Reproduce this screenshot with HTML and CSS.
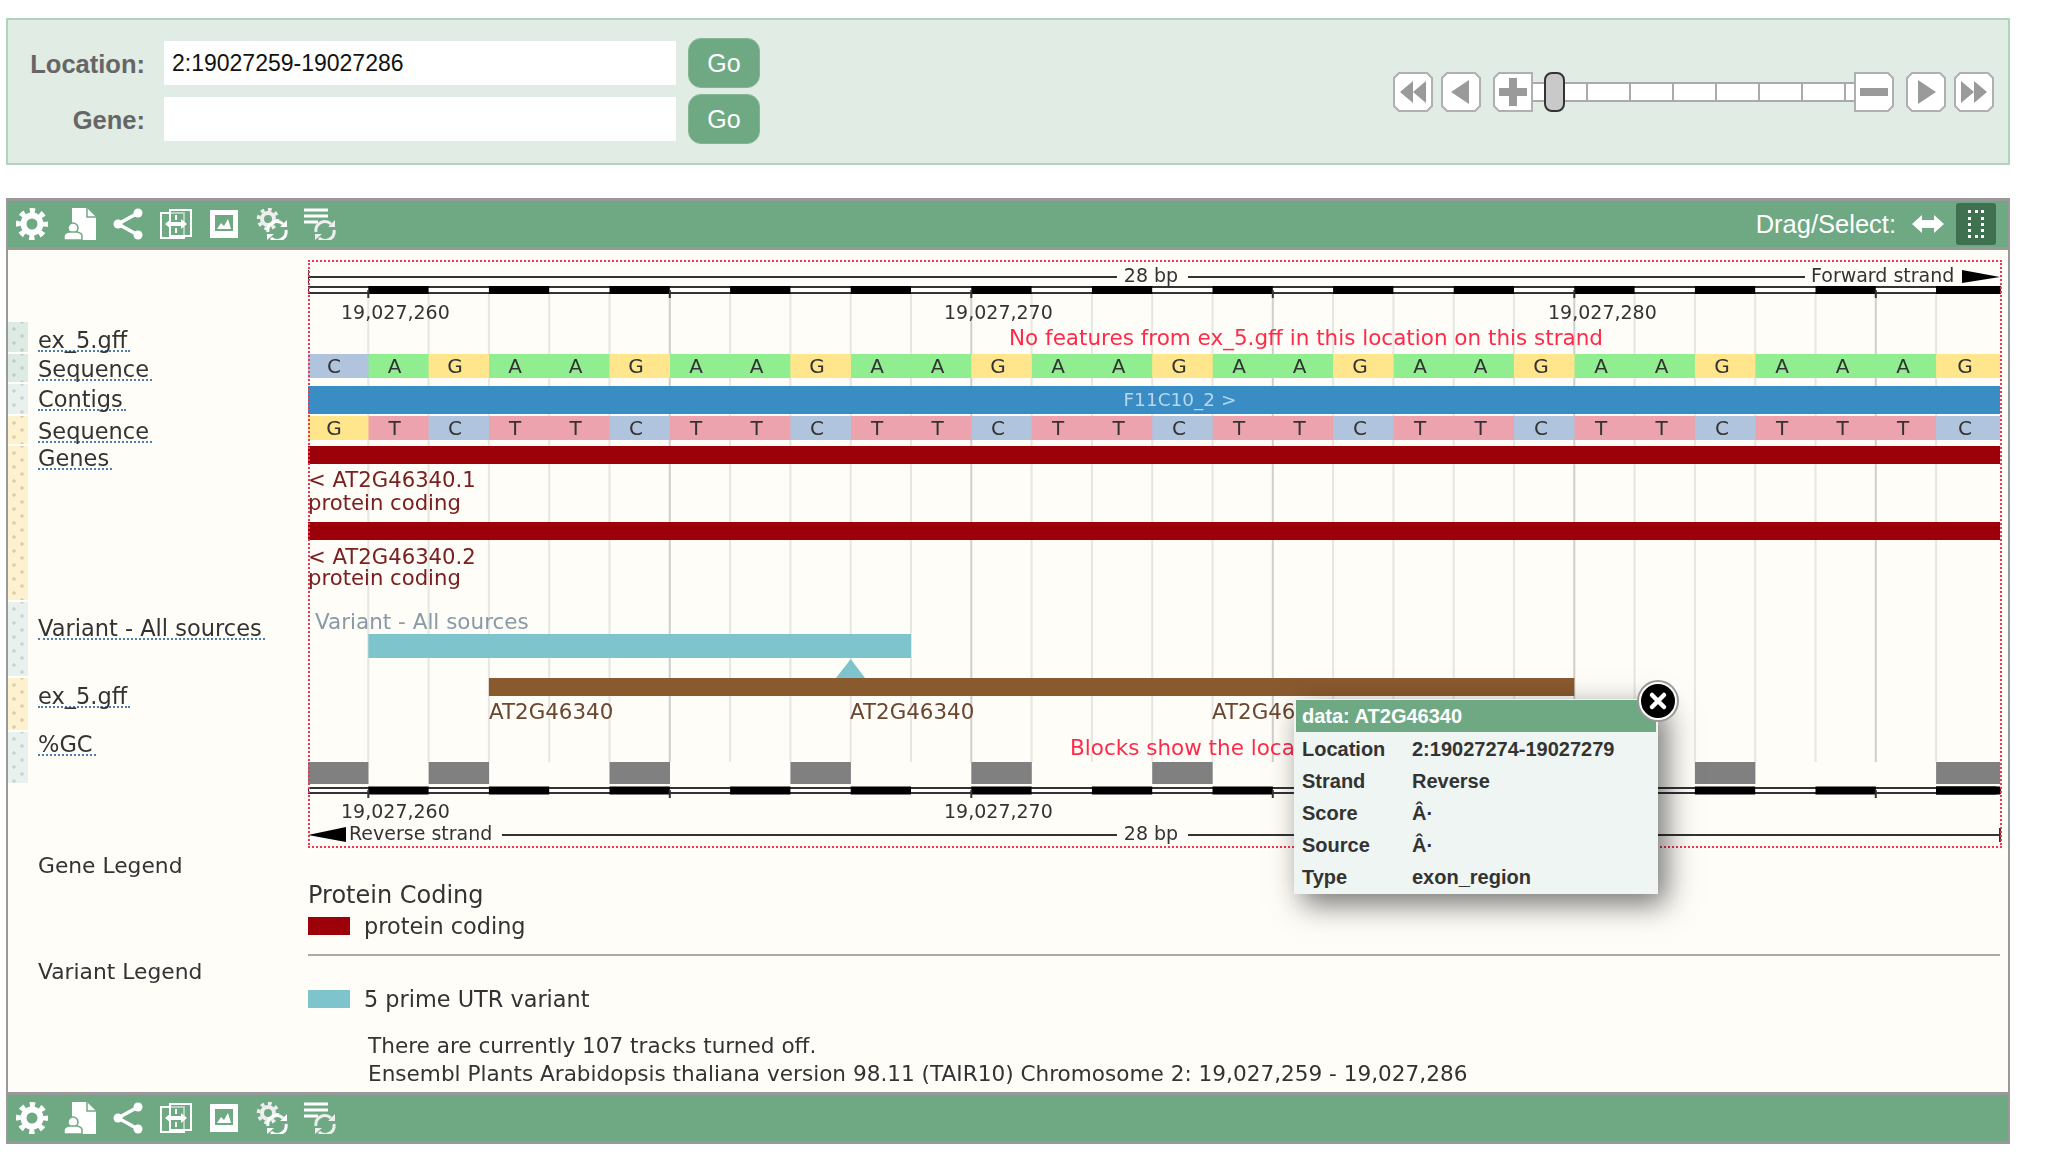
FILE: index.html
```html
<!DOCTYPE html>
<html>
<head>
    <title>Ensembl Plants Region in detail</title>
    <link rel="stylesheet" href="styles.css">
</head>
<body>
    <svg class="defs" width="0" height="0">
        <symbol id="i-gear" viewBox="0 0 32 32">
            <circle cx="16" cy="16" r="8.5" fill="none" stroke="#fff" stroke-width="6"/>
            <circle cx="16" cy="16" r="13.5" fill="none" stroke="#fff" stroke-width="5" stroke-dasharray="5.3 5.3" stroke-dashoffset="2.6"/>
        </symbol>
        <symbol id="i-doc" viewBox="0 0 32 32">
            <path d="M8 0H23L32 9V32H8Z" fill="#fff"/>
            <path d="M23 0V9H32" fill="none" stroke="#6fa983" stroke-width="1.5"/>
            <circle cx="9" cy="20" r="5" fill="#fff" stroke="#6fa983" stroke-width="1.5"/>
            <path d="M0 32V28Q0 25 5 24H13Q18 25 18 28V32Z" fill="#fff" stroke="#6fa983" stroke-width="1.5"/>
        </symbol>
        <symbol id="i-share" viewBox="0 0 32 32">
            <path d="M26 5L6 16L26 27" fill="none" stroke="#fff" stroke-width="3.5"/>
            <circle cx="26" cy="5" r="4.5" fill="#fff"/>
            <circle cx="6" cy="16" r="4.5" fill="#fff"/>
            <circle cx="26" cy="27" r="4.5" fill="#fff"/>
        </symbol>
        <symbol id="i-resize" viewBox="0 0 32 32">
            <path d="M1 5H24V30H1Z" fill="none" stroke="#fff" stroke-width="2"/>
            <path d="M10 2H31V28H10Z" fill="#6fa983" fill-opacity=".5" stroke="#fff" stroke-width="2"/>
            <path d="M5 16L11 11V14H21V11L27 16L21 21V18H11V21Z" fill="#fff"/>
            <path d="M16 7V12M16 20V25" stroke="#fff" stroke-width="2"/>
        </symbol>
        <symbol id="i-image" viewBox="0 0 32 32">
            <path d="M2 2H30V30H2ZM7 7V23H25V7Z" fill="#fff" fill-rule="evenodd"/>
            <path d="M9 21L13 15L16 18L20 11L23 21Z" fill="#fff"/>
        </symbol>
        <symbol id="i-gearsync" viewBox="0 0 32 32">
            <circle cx="12" cy="11" r="6" fill="none" stroke="#eee" stroke-width="4"/>
            <circle cx="12" cy="11" r="9.5" fill="none" stroke="#eee" stroke-width="3.5" stroke-dasharray="3.7 3.7"/>
            <path d="M12 24A9 9 0 0 1 27 16M30 22A9 9 0 0 1 15 30" fill="none" stroke="#fff" stroke-width="3"/>
            <path d="M24 19H31V12ZM18 26H11V32Z" fill="#fff"/>
        </symbol>
        <symbol id="i-listsync" viewBox="0 0 32 32">
            <path d="M0 2H24M0 8H24M0 14H14" stroke="#fff" stroke-width="3"/>
            <path d="M12 24A9 9 0 0 1 27 16M30 22A9 9 0 0 1 15 30" fill="none" stroke="#eee" stroke-width="3"/>
            <path d="M24 19H31V12ZM18 26H11V32Z" fill="#eee"/>
        </symbol>
    </svg>

    <div class="location-panel">
        <form class="location-form">
            <label class="field-label" for="loc">Location:</label>
            <input class="field-input" id="loc" type="text" value="2:19027259-19027286">
            <button class="go-button" type="button">Go</button>
            <label class="field-label" for="gene">Gene:</label>
            <input class="field-input" id="gene" type="text">
            <button class="go-button" type="button">Go</button>
        </form>
        <div class="nav">
            <svg class="nav-button" viewBox="0 0 40 40"><path class="nav-frame" d="M6 1H34L39 6V34L34 39H6L1 34V6Z"/><path class="nav-glyph" d="M20 9V31L7 20ZM33 9V31L20 20Z"/></svg>
            <svg class="nav-button" viewBox="0 0 40 40"><path class="nav-frame" d="M6 1H34L39 6V34L34 39H6L1 34V6Z"/><path class="nav-glyph" d="M28 8V32L10 20Z"/></svg>
            <div class="slider">
                <svg class="nav-button" viewBox="0 0 40 40"><path class="nav-frame" d="M6 1H39V39H6L1 34V6Z"/><path class="nav-glyph" d="M16 6H24V16H34V24H24V34H16V24H6V16H16Z"/></svg>
                <div class="slider-track">
                    <span class="tick tick-first"></span>
                    <span class="tick"></span>
                    <span class="tick"></span>
                    <span class="tick"></span>
                    <span class="tick"></span>
                    <span class="tick"></span>
                    <span class="tick"></span>
                    <span class="tick tick-last"></span>
                    <span class="slider-handle"></span>
                </div>
                <svg class="nav-button" viewBox="0 0 40 40"><path class="nav-frame" d="M1 1H34L39 6V34L34 39H1Z"/><path class="nav-glyph" d="M6 16H34V24H6Z"/></svg>
            </div>
            <svg class="nav-button" viewBox="0 0 40 40"><path class="nav-frame" d="M6 1H34L39 6V34L34 39H6L1 34V6Z"/><path class="nav-glyph" d="M12 8V32L30 20Z"/></svg>
            <svg class="nav-button" viewBox="0 0 40 40"><path class="nav-frame" d="M6 1H34L39 6V34L34 39H6L1 34V6Z"/><path class="nav-glyph" d="M7 9V31L20 20ZM20 9V31L33 20Z"/></svg>
        </div>
    </div>

    <div class="image-panel">
        <div class="toolbar">
            <svg class="tool"><use href="#i-gear"/></svg>
            <svg class="tool"><use href="#i-doc"/></svg>
            <svg class="tool"><use href="#i-share"/></svg>
            <svg class="tool"><use href="#i-resize"/></svg>
            <svg class="tool"><use href="#i-image"/></svg>
            <svg class="tool"><use href="#i-gearsync"/></svg>
            <svg class="tool"><use href="#i-listsync"/></svg>
            <div class="drag-select">
                <span>Drag/Select:</span>
                <svg class="drag-arrow" viewBox="0 0 32 18"><path d="M0 9L10 0V5H22V0L32 9L22 18V13H10V18Z" fill="#fff"/></svg>
                <span class="select-button"><span class="select-box"></span></span>
            </div>
        </div>

        <div class="tracks">
            <div class="track-labels">
                <div class="track track-1 green"><span class="track-name">ex_5.gff</span></div>
                <div class="track track-2 green"><span class="track-name">Sequence</span></div>
                <div class="track track-3 pale"><span class="track-name">Contigs</span></div>
                <div class="track track-4 yellow"><span class="track-name">Sequence</span></div>
                <div class="track track-5 yellow"><span class="track-name">Genes</span></div>
                <div class="track track-6 pale"><span class="track-name">Variant - All sources</span></div>
                <div class="track track-7 yellow"><span class="track-name">ex_5.gff</span></div>
                <div class="track track-8 pale"><span class="track-name">%GC</span></div>
            </div>

            <svg class="genome" width="1694" height="588" viewBox="0 0 1694 588">
                <!-- grid -->
                <path class="grid" d="M60.3 34V502M120.6 34V502M180.9 34V502M241.2 34V502M301.5 34V502M422.1 34V502M482.4 34V502M542.7 34V502M603 34V502M723.6 34V502M783.9 34V502M844.2 34V502M904.5 34V502M1025.1 34V502M1085.4 34V502M1145.7 34V502M1206 34V502M1326.6 34V502M1386.9 34V502M1447.2 34V502M1507.5 34V502M1628.1 34V502"/>
                <path class="grid major" d="M361.8 34V502M663.3 34V502M964.8 34V502M1266.3 34V502M1567.8 34V502"/>

                <!-- forward strand ruler -->
                <path class="rule" d="M0 17H809M880 17H1497M0 10V24"/>
                <text class="ruler-text" x="843" y="22" text-anchor="middle">28 bp</text>
                <text class="ruler-text" x="1503" y="22">Forward strand</text>
                <path d="M1654 10L1692 17L1654 23Z"/>
                <rect class="scale" x="0" y="27" width="1692" height="6"/>
                <line class="scale-on" x1="60.3" x2="1692" y1="30" y2="30"/>
                <rect x="1628.1" y="26" width="64" height="8"/>
                <path class="rule" d="M60.3 30V38M361.8 30V38M663.3 30V38M964.8 30V38M1266.3 30V38M1567.8 30V38"/>
                <text class="ruler-text" x="33" y="59">19,027,260</text>
                <text class="ruler-text" x="636" y="59">19,027,270</text>
                <text class="ruler-text" x="1240" y="59">19,027,280</text>

                <text class="note" x="701" y="85">No features from ex_5.gff in this location on this strand</text>

                <!-- forward sequence -->
                <rect class="base-a" x="0" y="94" width="1692" height="24"/>
                <rect class="base-c" x="0" y="94" width="60.5" height="24"/>
                <rect class="base-g" x="120.6" y="94" width="60.5" height="24"/>
                <rect class="base-g" x="301.5" y="94" width="60.5" height="24"/>
                <rect class="base-g" x="482.4" y="94" width="60.5" height="24"/>
                <rect class="base-g" x="663.3" y="94" width="60.5" height="24"/>
                <rect class="base-g" x="844.2" y="94" width="60.5" height="24"/>
                <rect class="base-g" x="1025.1" y="94" width="60.5" height="24"/>
                <rect class="base-g" x="1206" y="94" width="60.5" height="24"/>
                <rect class="base-g" x="1386.9" y="94" width="60.5" height="24"/>
                <rect class="base-g" x="1628.1" y="94" width="64" height="24"/>
                <text class="base-text" y="113" x="26 86.5 147 207 267.5 328 388 448.5 509 569 629.5 690 750 810.5 871 931 991.5 1052 1112 1172.5 1233 1293 1353.5 1414 1474 1534.5 1595 1657">CAGAAGAAGAAGAAGAAGAAGAAGAAAG</text>

                <!-- contig -->
                <rect class="contig" x="0" y="126" width="1692" height="28"/>
                <text class="contig-text" x="872" y="146" text-anchor="middle">F11C10_2 &gt;</text>

                <!-- reverse sequence -->
                <rect class="base-t" x="0" y="156" width="1692" height="24"/>
                <rect class="base-g" x="0" y="156" width="60.5" height="24"/>
                <rect class="base-c" x="120.6" y="156" width="60.5" height="24"/>
                <rect class="base-c" x="301.5" y="156" width="60.5" height="24"/>
                <rect class="base-c" x="482.4" y="156" width="60.5" height="24"/>
                <rect class="base-c" x="663.3" y="156" width="60.5" height="24"/>
                <rect class="base-c" x="844.2" y="156" width="60.5" height="24"/>
                <rect class="base-c" x="1025.1" y="156" width="60.5" height="24"/>
                <rect class="base-c" x="1206" y="156" width="60.5" height="24"/>
                <rect class="base-c" x="1386.9" y="156" width="60.5" height="24"/>
                <rect class="base-c" x="1628.1" y="156" width="64" height="24"/>
                <text class="base-text" y="175" x="26 86.5 147 207 267.5 328 388 448.5 509 569 629.5 690 750 810.5 871 931 991.5 1052 1112 1172.5 1233 1293 1353.5 1414 1474 1534.5 1595 1657">GTCTTCTTCTTCTTCTTCTTCTTCTTTC</text>

                <!-- genes -->
                <rect class="gene" x="0" y="186" width="1692" height="18"/>
                <text class="gene-text" x="0" y="227">&lt; AT2G46340.1</text>
                <text class="gene-text" x="0" y="250">protein coding</text>
                <rect class="gene" x="0" y="262" width="1692" height="18"/>
                <text class="gene-text" x="0" y="304">&lt; AT2G46340.2</text>
                <text class="gene-text" x="0" y="325">protein coding</text>

                <!-- variants -->
                <text class="variant-text" x="7" y="369">Variant - All sources</text>
                <rect class="variant" x="60.3" y="374" width="542.7" height="24"/>
                <path class="variant" d="M542.7 399L557 418H528Z"/>

                <!-- ex_5.gff -->
                <rect class="feature" x="180.9" y="418" width="1085.4" height="18"/>
                <text class="feature-text" x="181" y="459">AT2G46340</text>
                <text class="feature-text" x="542" y="459">AT2G46340</text>
                <text class="feature-text" x="904" y="459">AT2G46</text>

                <text class="note" x="762" y="495">Blocks show the loca</text>

                <!-- %GC -->
                <rect class="gc" x="0" y="502" width="60.5" height="22"/>
                <rect class="gc" x="120.6" y="502" width="60.5" height="22"/>
                <rect class="gc" x="301.5" y="502" width="60.5" height="22"/>
                <rect class="gc" x="482.4" y="502" width="60.5" height="22"/>
                <rect class="gc" x="663.3" y="502" width="60.5" height="22"/>
                <rect class="gc" x="844.2" y="502" width="60.5" height="22"/>
                <rect class="gc" x="1025.1" y="502" width="60.5" height="22"/>
                <rect class="gc" x="1206" y="502" width="60.5" height="22"/>
                <rect class="gc" x="1386.9" y="502" width="60.5" height="22"/>
                <rect class="gc" x="1628.1" y="502" width="64" height="22"/>

                <!-- reverse strand ruler -->
                <rect class="scale" x="0" y="528" width="1692" height="5"/>
                <line class="scale-on" x1="60.3" x2="1692" y1="530.5" y2="530.5"/>
                <rect x="1628.1" y="526.5" width="64" height="8"/>
                <path class="rule" d="M60.3 530V538M361.8 530V538M663.3 530V538M964.8 530V538M1266.3 530V538M1567.8 530V538"/>
                <text class="ruler-text" x="33" y="558">19,027,260</text>
                <text class="ruler-text" x="636" y="558">19,027,270</text>
                <path d="M38 567L0 575L38 582Z"/>
                <text class="ruler-text" x="41" y="580">Reverse strand</text>
                <path class="rule" d="M194 575H809M880 575H1692M1692 568V582"/>
                <text class="ruler-text" x="843" y="580" text-anchor="middle">28 bp</text>
            </svg>
        </div>

        <div class="legend-row">
            <div class="legend-label">Gene Legend</div>
            <div class="legend-body legend-gene">
                <div class="legend-title">Protein Coding</div>
                <div class="legend-item"><span class="swatch swatch-gene"></span>protein coding</div>
                <hr class="legend-rule">
            </div>
        </div>
        <div class="legend-row">
            <div class="legend-label">Variant Legend</div>
            <div class="legend-body legend-variant">
                <div class="legend-item"><span class="swatch swatch-variant"></span>5 prime UTR variant</div>
            </div>
        </div>
        <div class="image-notes">
            <div>There are currently 107 tracks turned off.</div>
            <div>Ensembl Plants Arabidopsis thaliana version 98.11 (TAIR10) Chromosome 2: 19,027,259 - 19,027,286</div>
        </div>

        <div class="toolbar">
            <svg class="tool"><use href="#i-gear"/></svg>
            <svg class="tool"><use href="#i-doc"/></svg>
            <svg class="tool"><use href="#i-share"/></svg>
            <svg class="tool"><use href="#i-resize"/></svg>
            <svg class="tool"><use href="#i-image"/></svg>
            <svg class="tool"><use href="#i-gearsync"/></svg>
            <svg class="tool"><use href="#i-listsync"/></svg>
        </div>

        <div class="popup">
            <span class="popup-close">
                <svg viewBox="0 0 24 24" width="24" height="24"><path d="M6 6L18 18M18 6L6 18" stroke="#fff" stroke-width="4.5" stroke-linecap="round"/></svg>
            </span>
            <div class="popup-title">data: AT2G46340</div>
            <div class="popup-row"><span>Location</span><span>2:19027274-19027279</span></div>
            <div class="popup-row"><span>Strand</span><span>Reverse</span></div>
            <div class="popup-row"><span>Score</span><span>Â·</span></div>
            <div class="popup-row"><span>Source</span><span>Â·</span></div>
            <div class="popup-row"><span>Type</span><span>exon_region</span></div>
        </div>
    </div>
</body>
</html>
```

FILE: styles.css
```css
body {
  margin: 0;
  padding: 18px 0 24px 6px;
  background-color: #fff;
  font-family: "Liberation Sans", Arial, sans-serif;
}

.defs {
  position: absolute;
}

/* location bar */
.location-panel {
  display: flex;
  justify-content: space-between;
  box-sizing: border-box;
  width: 2004px;
  height: 147px;
  padding: 18px 14px 0 0;
  border: 2px solid #afd3bd;
  background-color: #e0ece4;
}

.location-form {
  display: grid;
  grid-template-columns: 137px 512px 72px;
  grid-auto-rows: 50px;
  column-gap: 12px;
  row-gap: 6px;
  align-items: center;
  padding-left: 7px;
}

.field-label {
  margin-right: 7px;
  padding-top: 2px;
  color: #666;
  font-size: 25.5px;
  font-weight: bold;
  text-align: right;
}

.field-input {
  box-sizing: border-box;
  height: 44px;
  padding: 0 8px;
  border: none;
  background-color: #fff;
  color: #111;
  font-family: "Liberation Sans", Arial, sans-serif;
  font-size: 23px;
}

.go-button {
  height: 50px;
  border: 1px solid #82b595;
  border-radius: 13px;
  background-color: #6fa983;
  color: #fff;
  font-family: "Liberation Sans", Arial, sans-serif;
  font-size: 25px;
}

.nav {
  display: flex;
  gap: 8px;
  margin-top: 34px;
  height: 40px;
}

.nav-button {
  display: block;
  width: 40px;
  height: 40px;
  flex: none;
}

.nav-frame {
  fill: #fff;
  stroke: #b0b0b0;
  stroke-width: 2;
}

.nav-glyph {
  fill: #9a9a9a;
}

.slider {
  display: flex;
  align-items: center;
  margin: 0 4px;
}

.slider-track {
  position: relative;
  display: flex;
  box-sizing: border-box;
  width: 321px;
  height: 20px;
  border-top: 2px solid #aaa;
  border-bottom: 2px solid #aaa;
  background-color: #fff;
}

.tick {
  flex: 1;
  border-right: 2px solid #aaa;
}

.tick-first {
  flex: none;
  width: 53px;
}

.tick-last {
  flex: none;
  width: 8px;
  border-right: none;
}

.slider-handle {
  position: absolute;
  left: 11px;
  top: -12px;
  box-sizing: border-box;
  width: 21px;
  height: 40px;
  border: 2px solid #333;
  border-radius: 8px;
  background-color: #c9c9c9;
}

/* main image panel */
.image-panel {
  position: relative;
  box-sizing: border-box;
  width: 2004px;
  margin-top: 33px;
  border-left: 2px solid #999;
  border-right: 2px solid #999;
  background-color: #fefdf8;
}

.toolbar {
  display: flex;
  align-items: center;
  gap: 16px;
  box-sizing: border-box;
  height: 52px;
  padding: 0 12px 0 8px;
  border-top: 3px solid #999;
  border-bottom: 3px solid #999;
  background-color: #6fa983;
}

.tool {
  width: 32px;
  height: 32px;
  filter: blur(0.4px);
}

.drag-select {
  display: flex;
  align-items: center;
  margin-left: auto;
  color: #fff;
  font-size: 25.5px;
}

.drag-arrow {
  width: 32px;
  height: 18px;
  margin-left: 16px;
}

.select-button {
  display: flex;
  align-items: center;
  justify-content: center;
  width: 40px;
  height: 42px;
  margin-left: 12px;
  border-radius: 3px;
  background-color: #3f7150;
}

.select-box {
  box-sizing: border-box;
  width: 16px;
  height: 28px;
  border: 3px dotted #fff;
}

/* track labels and genome image */
.tracks {
  display: flex;
  align-items: flex-start;
  padding: 10px 0 4px;
}

.track-labels {
  display: flex;
  flex-direction: column;
  gap: 2px;
  flex: none;
  width: 300px;
  padding-top: 62px;
}

.track {
  box-sizing: border-box;
  padding-left: 30px;
  background-repeat: repeat-y, repeat-y, no-repeat;
  background-size: 20px 14px, 20px 14px, 20px 100%;
  background-position: 0 0, 0 7px, 0 0;
  font-family: "DejaVu Sans", sans-serif;
  font-size: 22.5px;
  line-height: 19px;
  color: #333;
}

.track-name {
  display: inline-block;
  padding-right: 3px;
  border-bottom: 2px dotted #4a7fb5;
  filter: blur(0.4px);
}

.green {
  background-image:
    radial-gradient(circle at 6px 7px, #c4d0c9 1.5px, transparent 2px),
    radial-gradient(circle at 14px 7px, #c4d0c9 1.5px, transparent 2px),
    linear-gradient(to right, #deebe4 20px, transparent 20px);
}

.pale {
  background-image:
    radial-gradient(circle at 6px 7px, #ccd6d2 1.5px, transparent 2px),
    radial-gradient(circle at 14px 7px, #ccd6d2 1.5px, transparent 2px),
    linear-gradient(to right, #e8f1ee 20px, transparent 20px);
}

.yellow {
  background-image:
    radial-gradient(circle at 6px 7px, #dcd2ae 1.5px, transparent 2px),
    radial-gradient(circle at 14px 7px, #dcd2ae 1.5px, transparent 2px),
    linear-gradient(to right, #fdf1cf 20px, transparent 20px);
}

.track-1 { height: 30px; padding-top: 9px; }
.track-2 { height: 28px; padding-top: 6px; }
.track-3 { height: 30px; padding-top: 6px; }
.track-4 { height: 28px; padding-top: 6px; }
.track-5 { height: 154px; padding-top: 3px; }
.track-6 { height: 74px; padding-top: 17px; }
.track-7 { height: 52px; padding-top: 9px; }
.track-8 { height: 51px; padding-top: 3px; }

.genome {
  display: block;
  flex: none;
  outline: 2px dotted #f5324f;
  outline-offset: -2px;
  filter: blur(0.4px);
}

.genome text {
  font-family: "DejaVu Sans", sans-serif;
}

.grid {
  fill: none;
  stroke: #e6e6e2;
  stroke-width: 2;
}

.major {
  stroke: #cfcfcb;
}

.rule {
  fill: none;
  stroke: #333;
  stroke-width: 2;
}

.ruler-text {
  fill: #333;
  font-size: 19px;
}

.scale {
  fill: #fff;
  stroke: #333;
  stroke-width: 2;
}

.scale-on {
  stroke: #000;
  stroke-width: 8;
  stroke-dasharray: 60.3 60.3;
}

.note {
  fill: #ff2a4a;
  font-size: 21.5px;
}

.base-a { fill: #90ee90; }
.base-g { fill: #ffe68c; }
.base-c { fill: #b0c4de; }
.base-t { fill: #eca3ad; }

.base-text {
  fill: #333;
  font-size: 20px;
  text-anchor: middle;
}

.contig { fill: #3a8cc4; }

.contig-text {
  fill: #b9d6ec;
  font-size: 18.5px;
}

.gene { fill: #9c0008; }

.gene-text {
  fill: #7a2020;
  font-size: 21.2px;
}

.variant { fill: #7dc4cc; }

.variant-text {
  fill: #8a99a6;
  font-size: 21.5px;
}

.feature { fill: #8a5a2f; }

.feature-text {
  fill: #6b4630;
  font-size: 21.4px;
}

.gc { fill: #808080; }

/* legends */
.legend-row {
  display: flex;
}

.legend-label {
  flex: none;
  width: 300px;
  padding-left: 30px;
  box-sizing: border-box;
}

.legend-label,
.legend-body,
.image-notes {
  color: #333;
  font-family: "DejaVu Sans", sans-serif;
  font-size: 21.8px;
  line-height: 28px;
  filter: blur(0.4px);
}

.legend-gene {
  padding-top: 29px;
  flex: 1;
  margin-right: 8px;
}

.legend-title {
  margin-bottom: 5px;
  font-size: 24px;
}

.legend-variant {
  padding-top: 29px;
}

.legend-item {
  display: flex;
  align-items: center;
  height: 24px;
  font-size: 22.4px;
}

.swatch {
  width: 42px;
  height: 18px;
  margin-right: 14px;
}

.swatch-gene { background-color: #9c0008; }
.swatch-variant { background-color: #7dc4cc; }

.legend-rule {
  height: 2px;
  margin: 16px 0 2px;
  border: none;
  background-color: #aaa;
}

.image-notes {
  padding: 21px 0 4px 360px;
  font-size: 21.6px;
}

/* feature popup */
.popup {
  position: absolute;
  left: 1286px;
  top: 501px;
  box-sizing: border-box;
  width: 364px;
  height: 195px;
  padding: 1px 2px 0;
  background-color: #eff5f2;
  box-shadow: 8px 10px 28px rgba(0, 0, 0, 0.55);
  color: #333;
  font-size: 20px;
  font-weight: bold;
}

.popup-title {
  height: 32px;
  margin-bottom: 1px;
  padding-left: 6px;
  background-color: #6fa983;
  color: #fff;
  line-height: 32px;
}

.popup-row {
  display: grid;
  grid-template-columns: 110px 1fr;
  height: 32px;
  padding-left: 6px;
  line-height: 32px;
}

.popup-close {
  position: absolute;
  right: -19px;
  top: -17px;
  display: flex;
  align-items: center;
  justify-content: center;
  box-sizing: border-box;
  width: 38px;
  height: 38px;
  border: 2px solid #fff;
  border-radius: 50%;
  background-color: #000;
  box-shadow: 0 0 0 2px #999;
}
```
